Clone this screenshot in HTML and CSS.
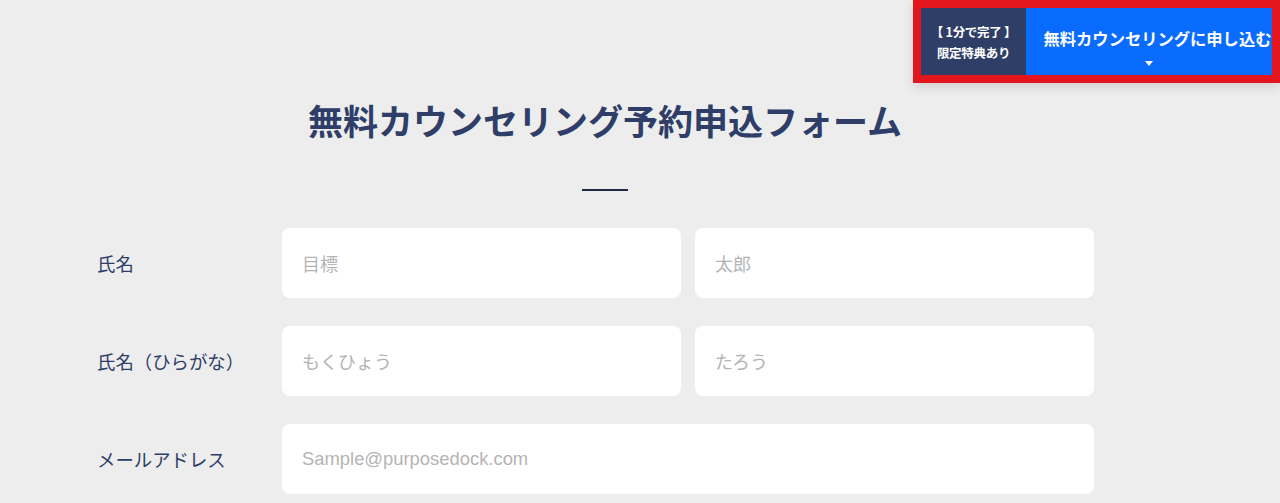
FILE: index.html
```html
<!DOCTYPE html>
<html lang="ja">
<head>
    <meta charset="UTF-8">
    <meta name="viewport" content="width=device-width, initial-scale=1.0">
    <title>無料カウンセリング予約申込フォーム</title>
    <link rel="stylesheet" href="styles.css">
</head>
<body>
    <a class="cta" href="#form">
        <span class="cta-badge">【 1分で完了 】<br>限定特典あり</span>
        <span class="cta-main">
            無料カウンセリングに申し込む
            <span class="cta-arrow"></span>
        </span>
    </a>

    <main class="page">
        <section class="heading">
            <h1>無料カウンセリング予約申込フォーム</h1>
            <div class="divider"></div>
        </section>

        <form id="form" class="form">
            <div class="form-row">
                <label class="form-label">氏名</label>
                <input type="text" placeholder="目標">
                <input type="text" placeholder="太郎">
            </div>
            <div class="form-row">
                <label class="form-label">氏名（ひらがな）</label>
                <input type="text" placeholder="もくひょう">
                <input type="text" placeholder="たろう">
            </div>
            <div class="form-row">
                <label class="form-label">メールアドレス</label>
                <input type="email" class="wide" placeholder="Sample@purposedock.com">
            </div>
        </form>
    </main>
</body>
</html>
```

FILE: styles.css
```css
body {
    margin: 0;
    padding: 0;
    background-color: #ededed;
    color: #2e3e68;
    font-family: "Noto Sans CJK JP", "Noto Sans", sans-serif;
}

.cta {
    position: fixed;
    top: 0;
    right: 0;
    display: flex;
    height: 67px;
    border: 8px solid #e3161e;
    text-decoration: none;
    color: white;
    font-weight: bold;
    box-shadow: 0 4px 10px rgba(0, 0, 0, 0.12);
    z-index: 10;
}

.cta-badge {
    width: 105px;
    background-color: #2f3e66;
    font-size: 12.5px;
    line-height: 21px;
    text-align: center;
    padding-top: 13px;
    box-sizing: border-box;
    white-space: nowrap;
    letter-spacing: -0.3px;
}

.cta-main {
    width: 246px;
    background-color: #0a6cff;
    font-size: 16.3px;
    line-height: 22px;
    padding: 19px 0 0 17px;
    box-sizing: border-box;
    white-space: nowrap;
    display: flex;
    flex-direction: column;
    align-items: center;
}

.cta-arrow {
    margin-top: 12px;
    margin-left: -17px;
    width: 0;
    height: 0;
    border-left: 4px solid transparent;
    border-right: 4px solid transparent;
    border-top: 5px solid white;
}

.page {
    padding: 96px 0 40px 97px;
}

.heading {
    width: 1016px;
    text-align: center;
}

.heading h1 {
    margin: 0;
    font-size: 35px;
    line-height: 48px;
    font-weight: bold;
    color: #2e3e68;
}

.divider {
    width: 46px;
    height: 2px;
    margin: 45px auto 0;
    background-color: #1e2a42;
}

.form {
    margin-top: 37px;
    width: 997px;
}

.form-row {
    display: grid;
    grid-template-columns: 171px 1fr 1fr;
    column-gap: 14px;
    align-items: center;
    margin-bottom: 28px;
}

.form-label {
    font-size: 18.4px;
    color: #2e3e68;
    white-space: nowrap;
}

.form-row input {
    height: 70px;
    border: none;
    border-radius: 8px;
    background-color: white;
    padding: 0 20px;
    box-sizing: border-box;
    font-size: 18px;
    font-family: "Noto Sans CJK JP", "Noto Sans", sans-serif;
    color: #333;
    outline: none;
    min-width: 0;
}

.form-row input.wide {
    grid-column: 2 / 4;
    font-size: 18.4px;
    font-family: "Liberation Sans", "Noto Sans CJK JP", sans-serif;
}

.form-row input::placeholder {
    color: #b4b4b4;
}
```
